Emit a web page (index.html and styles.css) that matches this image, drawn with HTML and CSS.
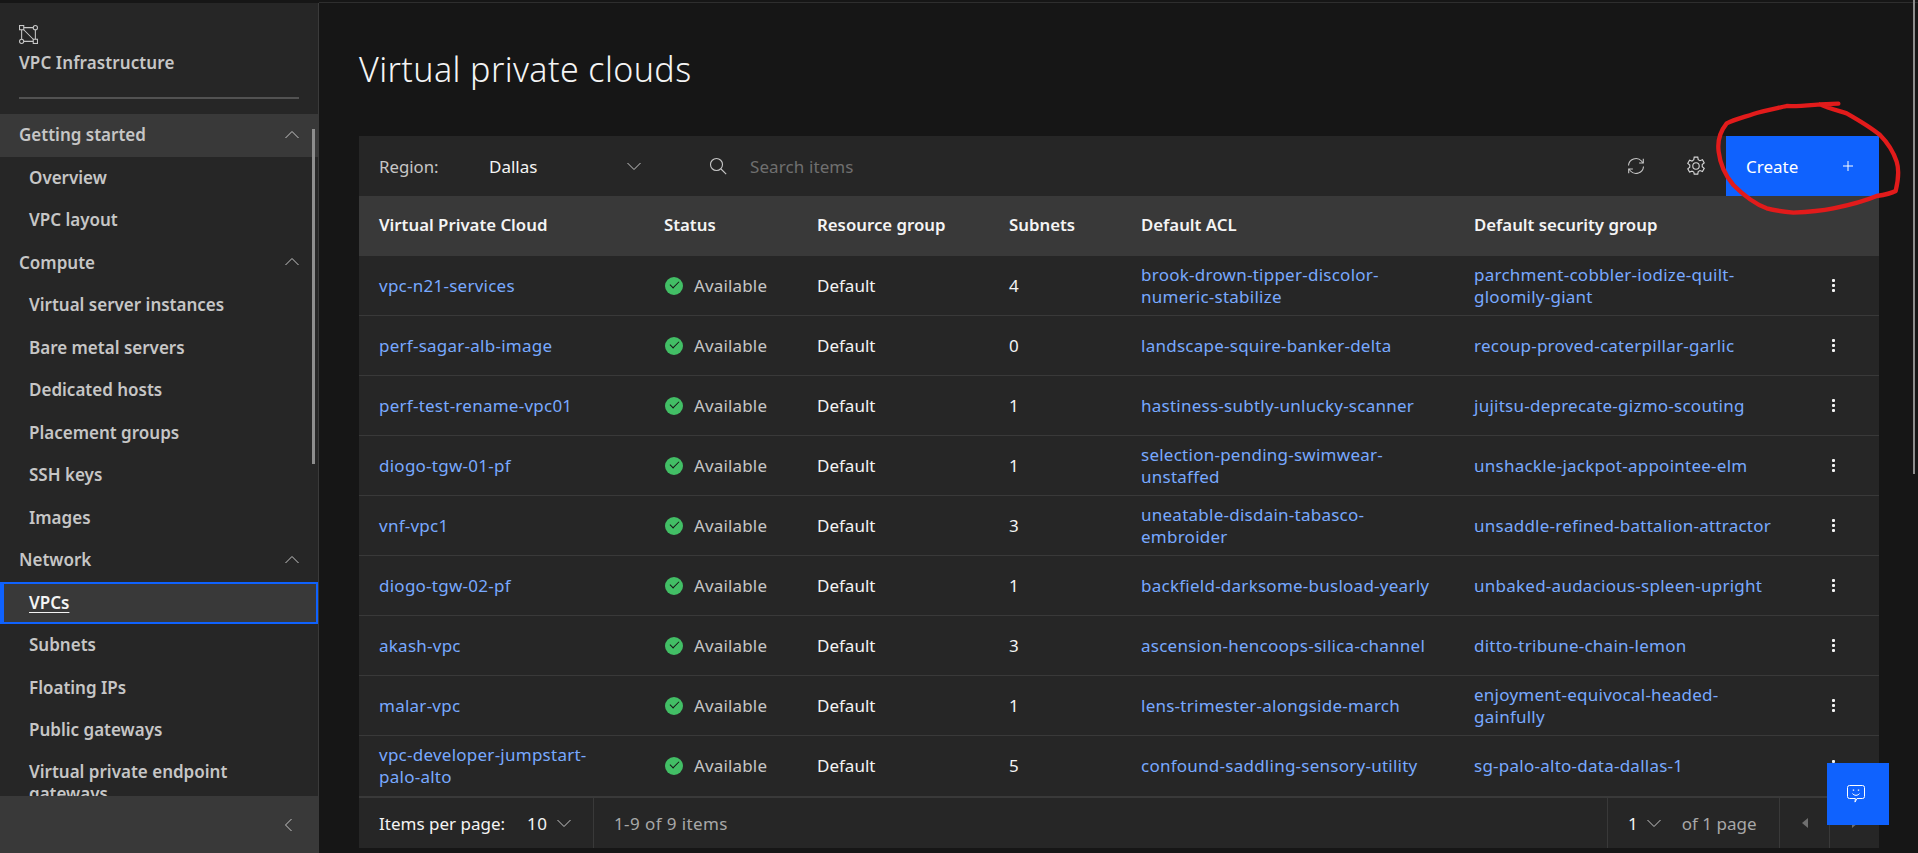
FILE: index.html
```html
<!DOCTYPE html>
<html>
<head>
    <meta charset="utf-8">
    <title>Virtual private clouds</title>
    <link rel="stylesheet" href="styles.css">
</head>
<body>
<div class="topbar"><div class="topbar-light"></div></div>
<div class="app">
    <aside class="sidenav">
        <div class="brand">
            <svg class="brand-icon" viewBox="0 0 18 18" fill="none" stroke="#c6c6c6" stroke-width="1">
                <rect x="0.5" y="0.5" width="4" height="4"/>
                <circle cx="15.5" cy="2.5" r="2"/>
                <circle cx="2.5" cy="15.5" r="2"/>
                <rect x="13.5" y="13.5" width="4" height="4"/>
                <path d="M4.5 2.5h9M2.5 4.5v9M4.5 15.5h9M15.5 4.5v9M4.5 4.5l9 9"/>
            </svg>
            <div class="brand-name">VPC Infrastructure</div>
        </div>
        <div class="nav-scroll">
            <div class="nav-list">
                <div class="nav-group nav-group-open">Getting started <svg class="chev" viewBox="0 0 16 16"><path d="M1.5 11 8 4.5 14.5 11"/></svg></div>
                <a class="nav-item">Overview</a>
                <a class="nav-item">VPC layout</a>
                <div class="nav-group">Compute <svg class="chev" viewBox="0 0 16 16"><path d="M1.5 11 8 4.5 14.5 11"/></svg></div>
                <a class="nav-item">Virtual server instances</a>
                <a class="nav-item">Bare metal servers</a>
                <a class="nav-item">Dedicated hosts</a>
                <a class="nav-item">Placement groups</a>
                <a class="nav-item">SSH keys</a>
                <a class="nav-item">Images</a>
                <div class="nav-group">Network <svg class="chev" viewBox="0 0 16 16"><path d="M1.5 11 8 4.5 14.5 11"/></svg></div>
                <a class="nav-item nav-active"><span>VPCs</span></a>
                <a class="nav-item">Subnets</a>
                <a class="nav-item">Floating IPs</a>
                <a class="nav-item">Public gateways</a>
                <a class="nav-item nav-wrap">Virtual private endpoint gateways</a>
            </div>
            <div class="nav-thumb"></div>
        </div>
        <div class="nav-footer">
            <svg class="collapse" viewBox="0 0 16 16"><path d="M10.5 2 4.5 8l6 6"/></svg>
        </div>
    </aside>
    <main class="content">
        <h1 class="title">Virtual private clouds</h1>
        <div class="panel">
            <div class="toolbar">
                <span class="region-label">Region:</span>
                <span class="region-value">Dallas</span>
                <svg class="chev region-chev" viewBox="0 0 16 16"><path d="M1.5 5 8 11.5 14.5 5"/></svg>
                <svg class="search-icon" viewBox="0 0 18 18" fill="none" stroke="#c6c6c6" stroke-width="1.1"><circle cx="7.5" cy="7.5" r="6"/><path d="m12 12 5.2 5.2"/></svg>
                <span class="search-text">Search items</span>
                <svg class="tool-icon tool-refresh" viewBox="0 0 18 18" fill="none" stroke="#c6c6c6" stroke-width="1.1"><path d="M1.5 8.5A7.5 7.5 0 0 1 14.5 4L16 6M16.5 9.5A7.5 7.5 0 0 1 3.5 14L2 12"/><path d="M16.3 1.8V6h-4.2M1.7 16.2V12h4.2"/></svg>
                <svg class="tool-icon tool-gear" viewBox="0 0 18 18" fill="none" stroke="#d6d6d6" stroke-width="1"><circle cx="9" cy="9" r="2.9"/><path d="M7.4 1h3.2l.4 2.3 1.6.9 2.2-.8 1.6 2.8-1.8 1.5v1.9l1.8 1.5-1.6 2.8-2.2-.8-1.6.9-.4 2.3H7.4L7 14.5l-1.6-.9-2.2.8-1.6-2.8 1.8-1.5V8.1L1.6 6.6l1.6-2.8 2.2.8L7 3.3z"/></svg>
                <button class="create-btn">Create <svg class="plus" viewBox="0 0 10 10" fill="none" stroke="#fff" stroke-width="1"><path d="M5 0v10M0 5h10"/></svg></button>
            </div>
            <div class="vpc-table">
                <div class="row head">
                    <div>Virtual Private Cloud</div><div>Status</div><div>Resource group</div><div>Subnets</div><div>Default ACL</div><div>Default security group</div><div></div>
                </div>
                <div class="row">
                    <a>vpc-n21-services</a><div class="status"><i></i>Available</div><div>Default</div><div>4</div><a>brook-drown-tipper-discolor-numeric-stabilize</a><a>parchment-cobbler-iodize-quilt-gloomily-giant</a><div class="kebab"><b></b></div>
                </div>
                <div class="row">
                    <a>perf-sagar-alb-image</a><div class="status"><i></i>Available</div><div>Default</div><div>0</div><a>landscape-squire-banker-delta</a><a>recoup-proved-caterpillar-garlic</a><div class="kebab"><b></b></div>
                </div>
                <div class="row">
                    <a>perf-test-rename-vpc01</a><div class="status"><i></i>Available</div><div>Default</div><div>1</div><a>hastiness-subtly-unlucky-scanner</a><a>jujitsu-deprecate-gizmo-scouting</a><div class="kebab"><b></b></div>
                </div>
                <div class="row">
                    <a>diogo-tgw-01-pf</a><div class="status"><i></i>Available</div><div>Default</div><div>1</div><a>selection-pending-swimwear-unstaffed</a><a>unshackle-jackpot-appointee-elm</a><div class="kebab"><b></b></div>
                </div>
                <div class="row">
                    <a>vnf-vpc1</a><div class="status"><i></i>Available</div><div>Default</div><div>3</div><a>uneatable-disdain-tabasco-embroider</a><a>unsaddle-refined-battalion-attractor</a><div class="kebab"><b></b></div>
                </div>
                <div class="row">
                    <a>diogo-tgw-02-pf</a><div class="status"><i></i>Available</div><div>Default</div><div>1</div><a>backfield-darksome-busload-yearly</a><a>unbaked-audacious-spleen-upright</a><div class="kebab"><b></b></div>
                </div>
                <div class="row">
                    <a>akash-vpc</a><div class="status"><i></i>Available</div><div>Default</div><div>3</div><a>ascension-hencoops-silica-channel</a><a>ditto-tribune-chain-lemon</a><div class="kebab"><b></b></div>
                </div>
                <div class="row">
                    <a>malar-vpc</a><div class="status"><i></i>Available</div><div>Default</div><div>1</div><a>lens-trimester-alongside-march</a><a>enjoyment-equivocal-headed-gainfully</a><div class="kebab"><b></b></div>
                </div>
                <div class="row row-last">
                    <a>vpc-developer-jumpstart-palo-alto</a><div class="status"><i></i>Available</div><div>Default</div><div>5</div><a>confound-saddling-sensory-utility</a><a>sg-palo-alto-data-dallas-1</a><div class="kebab"><b></b></div>
                </div>
            </div>
            <div class="pager">
                <div class="pager-size">Items per page: <span class="pager-num">10</span><svg class="chev" viewBox="0 0 16 16"><path d="M1.5 5 8 11.5 14.5 5"/></svg></div>
                <div class="pager-count">1-9 of 9 items</div>
                <div class="pager-page"><span class="pager-cur">1</span><svg class="chev" viewBox="0 0 16 16"><path d="M1.5 5 8 11.5 14.5 5"/></svg><span class="pager-of">of 1 page</span></div>
                <div class="pager-arrow"><span class="tri-left"></span></div>
                <div class="pager-arrow pager-arrow-end"><span class="tri-right"></span></div>
            </div>
        </div>
    </main>
    <div class="page-scroll"><div class="page-thumb"></div></div>
</div>

<!-- red marker circle drawn over the button -->
<svg class="scribble" viewBox="630 60 600 360" fill="none" stroke="#e21b1b" stroke-width="13" stroke-linecap="round" stroke-linejoin="round">
    <path d="M1015 71 960 73C925 76 890 80 860 78 830 85 790 92 760 102 730 112 700 120 680 130 660 155 652 185 656 215 660 250 675 285 700 315 725 340 760 370 800 385 825 392 860 396 880 398 920 396 965 392 1000 385 1050 375 1090 365 1130 348 1150 345 1170 342 1187 333 1195 300 1198 270 1190 245 1180 215 1165 190 1140 165 1110 140 1075 120 1040 100 1015 92 985 85 960 73"/>
</svg>
<button class="chat-btn">
    <svg viewBox="0 0 18 18" fill="none" stroke="#fff" stroke-width="1"><path d="M2.5.5h13a2 2 0 0 1 2 2v9a2 2 0 0 1-2 2H10l-2 3.6.4-3.6H2.5a2 2 0 0 1-2-2v-9a2 2 0 0 1 2-2z"/><path d="M5.5 8.5c1.5 2.4 5.5 2.4 7 0"/><path d="M6.5 4.5v1.2M11.5 4.5v1.2" stroke-width="1.4"/></svg>
</button>
</body>
</html>
```

FILE: styles.css
```css
* {
  box-sizing: border-box;
}

html, body {
  height: 100%;
}

body {
  margin: 0;
  overflow: hidden;
  background-color: #161616;
  color: #f4f4f4;
  font-family: "Noto Sans", "Open Sans", sans-serif;
  font-size: 17px;
}

.topbar {
  height: 3px;
  background-color: #161616;
  border-bottom: 1px solid #2e2e2e;
}

.topbar-light {
  width: 319px;
  height: 3px;
  background-color: #161616;
}

.app {
  display: flex;
  height: 850px;
}

.sidenav {
  width: 319px;
  flex: none;
  display: flex;
  flex-direction: column;
  background-color: #262626;
  border-right: 1px solid #3a3a3a;
}

.brand {
  height: 111px;
  flex: none;
  padding: 22px 19px 0;
}

.brand-icon {
  display: block;
  width: 19px;
  height: 19px;
}

.brand-name {
  margin-top: 6px;
  padding-bottom: 21px;
  border-bottom: 2px solid #525252;
  width: 280px;
  font-size: 17px;
  line-height: 26px;
  font-weight: 600;
  letter-spacing: .1px;
  color: #c6c6c6;
}

.nav-scroll {
  flex: 1;
  overflow: hidden;
  position: relative;
}

.nav-group, .nav-item {
  display: flex;
  align-items: center;
  height: 42.5px;
  padding-bottom: 1px;
  font-size: 17px;
  font-weight: 600;
  color: #c6c6c6;
}

.nav-group {
  justify-content: space-between;
  padding-left: 19px;
  padding-right: 18px;
}

.nav-group-open {
  background-color: #393939;
}

.nav-item {
  padding-left: 29px;
}

.nav-active {
  color: #f4f4f4;
  background-color: #393939;
  border: 2px solid #0f62fe;
  border-left-width: 4px;
  padding-left: 25px;
  padding-bottom: 0;
}

.nav-active span {
  text-decoration: underline;
  text-underline-offset: 3px;
}

.nav-wrap {
  display: block;
  height: auto;
  padding-top: 9px;
  padding-right: 29px;
  line-height: 22px;
}

.chev {
  width: 16px;
  height: 16px;
  fill: none;
  stroke: #c6c6c6;
  stroke-width: 1;
  flex: none;
}

.nav-thumb {
  position: absolute;
  top: 15px;
  right: 3px;
  width: 3px;
  height: 335px;
  background-color: #8d8d8d;
}

.nav-footer {
  height: 57px;
  flex: none;
  display: flex;
  align-items: center;
  justify-content: flex-end;
  padding-right: 21px;
  background-color: #393939;
}

.collapse {
  width: 16px;
  height: 16px;
  fill: none;
  stroke: #c6c6c6;
  stroke-width: 1;
}

.content {
  flex: 1;
  min-width: 0;
  padding: 0 39px 0 40px;
}

.title {
  margin: 0;
  height: 133px;
  padding-top: 46px;
  font-size: 34px;
  line-height: 40px;
  font-weight: 300;
  letter-spacing: .4px;
  color: #f4f4f4;
}

.panel {
  width: 1520px;
  background-color: #262626;
}

.toolbar {
  display: flex;
  align-items: center;
  height: 60px;
  padding-left: 20px;
}

.region-label {
  width: 110px;
  font-size: 16.8px;
  color: #c6c6c6;
}

.region-value {
  width: 137px;
  color: #f4f4f4;
}

.region-chev {
  margin-right: 67px;
}

.search-icon {
  width: 18px;
  height: 18px;
  margin-right: 23px;
}

.search-text {
  flex: 1;
  letter-spacing: .1px;
  color: #6f6f6f;
}

.tool-icon {
  width: 18px;
  height: 18px;
}

.tool-gear {
  width: 20px;
  height: 20px;
  margin-left: 41px;
  margin-right: 20px;
}

.create-btn {
  display: flex;
  align-items: center;
  justify-content: space-between;
  width: 153px;
  height: 60px;
  padding: 0 26px 0 20px;
  border: 0;
  background-color: #0f62fe;
  color: #fff;
  font: inherit;
}

.plus {
  width: 10px;
  height: 10px;
}

.row {
  display: grid;
  grid-template-columns: 285px 153px 192px 132px 333px 354px 51px;
  align-items: center;
  height: 60px;
  padding-left: 20px;
  border-bottom: 1px solid #393939;
  color: #f4f4f4;
  line-height: 22px;
}

.row a {
  color: #78a9ff;
  padding-right: 30px;
  letter-spacing: .25px;
}

.row a:first-child {
  padding-right: 50px;
}

.row a:nth-child(6) {
  padding-right: 50px;
}

.head {
  background-color: #393939;
  border-bottom: 0;
  padding-bottom: 2px;
  font-size: 16.8px;
  font-weight: 600;
}

.row-last {
  border-bottom: 0;
}

.status {
  display: flex;
  align-items: center;
  letter-spacing: .15px;
  color: #c6c6c6;
}

.status i {
  position: relative;
  width: 18px;
  height: 18px;
  margin-left: 1px;
  margin-right: 11px;
  border-radius: 50%;
  background-color: #42be65;
}

.status i::after {
  content: "";
  position: absolute;
  left: 5px;
  top: 4px;
  width: 8px;
  height: 4px;
  border-left: 1.5px solid #161616;
  border-bottom: 1.5px solid #161616;
  transform: rotate(-45deg);
}

.kebab b {
  display: block;
  width: 3px;
  height: 3px;
  margin-left: 4px;
  border-radius: 1px;
  background-color: #f4f4f4;
  box-shadow: 0 -5px 0 #f4f4f4, 0 5px 0 #f4f4f4;
}

.pager {
  display: flex;
  align-items: stretch;
  height: 52px;
  border-top: 2px solid #393939;
  color: #f4f4f4;
}

.pager-size {
  display: flex;
  align-items: center;
  width: 235px;
  padding-left: 20px;
  border-right: 1px solid #393939;
}

.pager-num {
  margin: 0 9px 0 22px;
  letter-spacing: .5px;
}

.pager-count {
  flex: 1;
  display: flex;
  align-items: center;
  padding-left: 20px;
  letter-spacing: .4px;
  color: #a8a8a8;
}

.pager-page {
  display: flex;
  align-items: center;
  width: 172px;
  padding-left: 20px;
  border-left: 1px solid #393939;
}

.pager-page .chev {
  margin-left: 8px;
}

.pager-of {
  margin-left: 20px;
  color: #a8a8a8;
}

.pager-arrow {
  display: flex;
  align-items: center;
  justify-content: center;
  width: 50px;
  border-left: 1px solid #393939;
}

.pager-arrow-end {
  width: 50px;
}

.tri-left, .tri-right {
  width: 0;
  height: 0;
  border-top: 5px solid transparent;
  border-bottom: 5px solid transparent;
}

.tri-left {
  border-right: 6px solid #6f6f6f;
}

.tri-right {
  border-left: 6px solid #6f6f6f;
}

.page-scroll {
  width: 0;
  position: relative;
}

.page-thumb {
  position: absolute;
  top: -3px;
  right: 3px;
  width: 2px;
  height: 474px;
  background-color: #8d8d8d;
}

.scribble {
  position: absolute;
  left: 1710px;
  top: 100px;
  width: 200px;
  height: 120px;
}

.chat-btn {
  position: absolute;
  left: 1827px;
  top: 763px;
  width: 62px;
  height: 62px;
  padding: 0 4px 0 0;
  border: 0;
  display: flex;
  align-items: center;
  justify-content: center;
  background-color: #0f62fe;
}

.chat-btn svg {
  width: 18px;
  height: 18px;
}
```
